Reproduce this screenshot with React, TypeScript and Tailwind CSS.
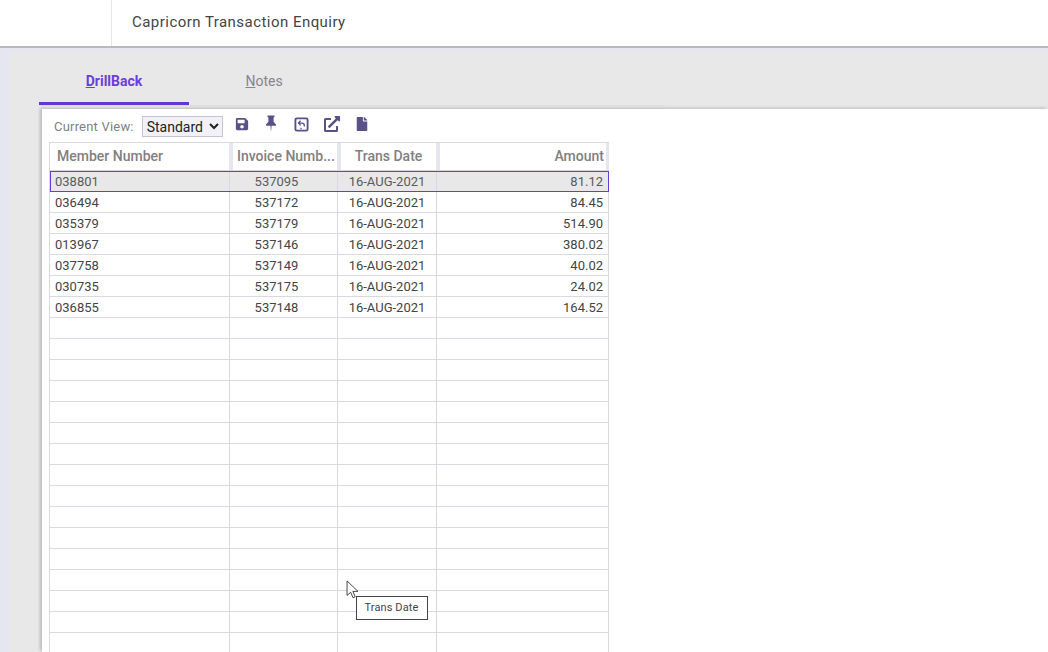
import { FaSave, FaExternalLinkAlt, FaFile } from 'react-icons/fa';

const rows = [
  { member: '038801', invoice: '537095', date: '16-AUG-2021', amount: '81.12' },
  { member: '036494', invoice: '537172', date: '16-AUG-2021', amount: '84.45' },
  { member: '035379', invoice: '537179', date: '16-AUG-2021', amount: '514.90' },
  { member: '013967', invoice: '537146', date: '16-AUG-2021', amount: '380.02' },
  { member: '037758', invoice: '537149', date: '16-AUG-2021', amount: '40.02' },
  { member: '030735', invoice: '537175', date: '16-AUG-2021', amount: '24.02' },
  { member: '036855', invoice: '537148', date: '16-AUG-2021', amount: '164.52' },
];

const emptyRows = Array.from({ length: 16 }, (_, i) => i);

function Row({ row, selected }: { row?: (typeof rows)[number]; selected?: boolean }) {
  return (
    <div
      className={`flex h-[21px] shrink-0 border-b border-[#d9d9e6] text-[13px] leading-[21px] ${
        selected ? 'bg-[#e8e8e8] text-[#5a5a5a] outline-1 -outline-offset-1 outline-[#6c3bd5]' : 'text-[#444444]'
      }`}
    >
      <div className="w-[180px] shrink-0 border-r border-[#d9d9e6] pl-[5px]">{row?.member}</div>
      <div className="w-[108px] shrink-0 border-r border-[#d9d9e6] pr-[14px] text-center">{row?.invoice}</div>
      <div className="w-[99px] shrink-0 border-r border-[#d9d9e6] text-center">{row?.date}</div>
      <div className="w-[172px] shrink-0 border-r border-[#d9d9e6] pr-[5px] text-right">{row?.amount}</div>
    </div>
  );
}

export default function App() {
  return (
    <div className="relative flex h-[652px] w-[1048px] flex-col overflow-hidden bg-[#e6e6f0] font-['Roboto',sans-serif]">
      {/* Header */}
      <div className="flex h-[48px] shrink-0 border-b-2 border-[#b9b9c0] bg-white">
        <div className="w-[112px] border-r border-[#e6e6e6]" />
        <div className="pl-[20px] pt-[13px] text-[15px] leading-[18px] tracking-[0.46px] text-[#444444]">
          Capricorn Transaction Enquiry
        </div>
      </div>

      <div className="ml-[9px] mt-[4px] flex min-h-0 flex-1 flex-col bg-[#e8e8e8]">
        {/* Tabs */}
        <div className="ml-[30px] flex h-[54px] w-[626px] shrink-0 border-b border-[#e0e0e0]">
          <div className="h-[53px] w-[150px] border-b-[3px] border-[#6634d6] pt-[21px] text-center text-[14px] leading-[16px] font-bold text-[#6a3fd6]">
            <span className="underline">D</span>rillBack
          </div>
          <div className="h-[53px] w-[150px] pt-[21px] text-center text-[14px] leading-[16px] font-normal text-[#85858f]">
            <span className="underline">N</span>otes
          </div>
        </div>

        {/* Panel */}
        <div className="ml-[33px] mt-[3px] flex min-h-0 flex-1 flex-col bg-white pl-[7px] shadow-[-2px_-1px_3px_rgba(0,0,0,0.2)]">
          <div className="flex h-[33px] shrink-0 items-start pt-[7px]">
            <span className="ml-[5px] mt-[3px] text-[13px] leading-[16px] tracking-[0.2px] text-[#808080]">Current View:</span>
            <select className="ml-[8px] h-[21px] w-[81px] border border-[#c5c3dc] bg-[#f1f1f6] text-[14px] text-[#222222]" defaultValue="Standard">
              <option>Standard</option>
            </select>
            <div className="mt-[-1px] flex items-center text-[#5b5189]">
              <FaSave className="ml-[12px] h-[14px] w-[14px]" />
              <svg viewBox="0 0 12 18" className="ml-[16px] h-[18px] w-[12px]" fill="currentColor">
                <path d="M2.5 0.5h7v1.6L8.6 2.6v4.2l2.4 2.6v1.4H6.6L6 17 5.4 10.8H1V9.4l2.4-2.6V2.6L2.5 2.1z" />
              </svg>
              <svg viewBox="0 0 16 16" className="ml-[17px] mt-[1px] h-[15px] w-[15px]" fill="none" stroke="currentColor" strokeWidth="2">
                <rect x="1.5" y="1.5" width="13" height="13" rx="1.5" />
                <path d="M5 6.5h3.5a2.5 2.5 0 0 1 2.5 2.5v1M7 4 4.8 6.5 7 9M7.5 11.5v1.5" strokeWidth="1.4" />
              </svg>
              <FaExternalLinkAlt className="ml-[15px] h-[16px] w-[16px]" />
              <FaFile className="ml-[16px] h-[14px] w-[12px]" />
            </div>
          </div>

          {/* Grid */}
          <div className="min-h-0 w-[560px] flex-1 overflow-hidden border-l border-[#d9d9e6]">
            <div className="flex h-[29px] border-y border-[#d9d9e6] text-[14px] font-medium leading-[26px] text-[#808080]">
              <div className="w-[183px] shrink-0 border-r-4 border-[#e6e6f0] pl-[7px]">Member Number</div>
              <div className="w-[108px] shrink-0 truncate border-r-4 border-[#e6e6f0] pl-[4px]">Invoice Numb...</div>
              <div className="w-[99px] shrink-0 border-r-4 border-[#e6e6f0] text-center">Trans Date</div>
              <div className="w-[170px] shrink-0 border-r-4 border-[#e6e6f0] pr-[2px] text-right">Amount</div>
            </div>
            <Row row={rows[0]} selected />
            {rows.slice(1).map((row) => (
              <Row key={row.member} row={row} />
            ))}
            {emptyRows.map((i) => (
              <Row key={i} />
            ))}
          </div>
        </div>
      </div>

      {/* Mouse pointer */}
      <svg viewBox="0 0 14 22" className="absolute left-[346px] top-[580px] h-[20px] w-[13px]" fill="white" stroke="#333333" strokeWidth="1">
        <path d="M1 1v16l4-3.5 2.6 6 2.4-1-2.6-6H13z" />
      </svg>

      {/* Tooltip */}
      <div className="absolute left-[356px] top-[596px] flex h-[24px] w-[72px] items-center justify-center border border-[#444444] bg-white pr-[1px] text-[11px] tracking-[0.1px] text-[#444444]">
        Trans Date
      </div>
    </div>
  );
}
